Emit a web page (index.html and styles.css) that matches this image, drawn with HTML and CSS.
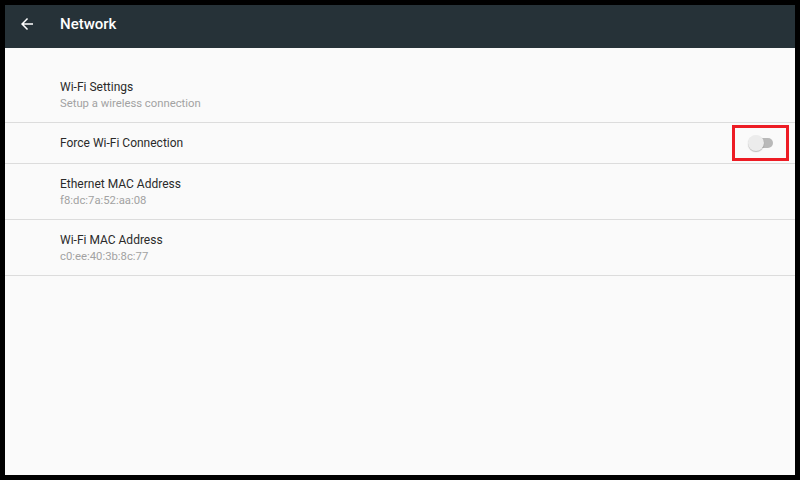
FILE: index.html
```html
<!DOCTYPE html>
<html lang="en">
  <head>
    <meta charset="UTF-8" />
    <meta name="viewport" content="width=device-width, initial-scale=1.0" />
    <title>Network</title>
    <link rel="stylesheet" href="styles.css">
  </head>
  <body>
    <div class="screen">
      <header class="toolbar">
        <svg class="back" width="18" height="18" viewBox="0 0 24 24">
          <path d="M20 11H7.83l5.59-5.59L12 4l-8 8 8 8 1.41-1.41L7.83 13H20v-2z" fill="#fff" />
        </svg>
        <h1 class="title">Network</h1>
      </header>
      <ul class="prefs">
        <li class="pref two-line">
          <span class="pref-title">Wi-Fi Settings</span>
          <span class="pref-summary">Setup a wireless connection</span>
        </li>
        <li class="pref one-line">
          <span class="pref-title">Force Wi-Fi Connection</span>
          <span class="highlight">
            <span class="switch"><span class="thumb"></span></span>
          </span>
        </li>
        <li class="pref two-line">
          <span class="pref-title">Ethernet MAC Address</span>
          <span class="pref-summary">f8:dc:7a:52:aa:08</span>
        </li>
        <li class="pref two-line">
          <span class="pref-title">Wi-Fi MAC Address</span>
          <span class="pref-summary">c0:ee:40:3b:8c:77</span>
        </li>
      </ul>
    </div>
  </body>
</html>
```

FILE: styles.css
```css
:root {
  --toolbar: #263238;
  --page: #fafafa;
  --divider: #dcdcdc;
  --text: #2a2a2a;
  --summary: #a2a2a2;
}

html,
body {
  margin: 0;
  height: 100%;
  background: #000;
}

.screen {
  margin: 5px;
  height: 470px;
  background: var(--page);
  font-family: Roboto, "Liberation Sans", sans-serif;
  overflow: hidden;
}

.toolbar {
  height: 43px;
  box-sizing: border-box;
  padding: 0 0 6px 13px;
  background: var(--toolbar);
  display: flex;
  align-items: center;
}

.back {
  display: block;
}

.title {
  margin: 0 0 0 24px;
  color: #fff;
  font-size: 15px;
  font-weight: 500;
}

.prefs {
  list-style: none;
  margin: 0;
  padding: 19px 0 0;
}

.pref {
  border-bottom: 1px solid var(--divider);
  padding-left: 55px;
  box-sizing: border-box;
}

.two-line {
  height: 56px;
  padding-top: 12px;
  display: flex;
  flex-direction: column;
}

.one-line {
  height: 41px;
  display: flex;
  align-items: center;
  justify-content: space-between;
  padding-right: 6px;
}

.pref-title {
  font-size: 12px;
  line-height: 16px;
  color: var(--text);
}

.pref-summary {
  margin-top: 1px;
  font-size: 11.3px;
  line-height: 16px;
  color: var(--summary);
}

.highlight {
  width: 51px;
  height: 30px;
  border: 3px solid #ed1c24;
  display: flex;
  align-items: center;
  justify-content: center;
}

.switch {
  position: relative;
  width: 20px;
  height: 10px;
  border-radius: 5px;
  background: #b9b9b9;
  margin-left: 4px;
}

.thumb {
  position: absolute;
  left: -5px;
  top: -3px;
  width: 16px;
  height: 16px;
  border-radius: 50%;
  background: #ececec;
  box-shadow: 0 1px 1px rgba(0, 0, 0, 0.25);
}
```
